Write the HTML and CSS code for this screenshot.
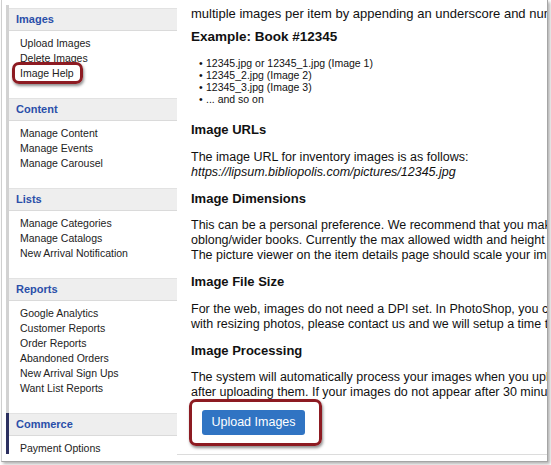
FILE: index.html
```html
<!DOCTYPE html>
<html lang="en">
<head>
  <meta charset="UTF-8">
  <title>Image Help</title>
  <link rel="stylesheet" href="styles.css">
</head>
<body>

<div class="window">
  <div class="layout">

    <!-- Admin side menu -->
    <aside class="sidebar">
      <section class="nav-group">
        <h4 class="nav-title">Images</h4>
        <ul class="nav-links">
          <li>Upload Images</li>
          <li>Delete Images</li>
          <li class="marked">Image Help<span class="callout callout-help"></span></li>
        </ul>
      </section>

      <section class="nav-group">
        <h4 class="nav-title">Content</h4>
        <ul class="nav-links">
          <li>Manage Content</li>
          <li>Manage Events</li>
          <li>Manage Carousel</li>
        </ul>
      </section>

      <section class="nav-group">
        <h4 class="nav-title">Lists</h4>
        <ul class="nav-links">
          <li>Manage Categories</li>
          <li>Manage Catalogs</li>
          <li>New Arrival Notification</li>
        </ul>
      </section>

      <section class="nav-group">
        <h4 class="nav-title">Reports</h4>
        <ul class="nav-links">
          <li>Google Analytics</li>
          <li>Customer Reports</li>
          <li>Order Reports</li>
          <li>Abandoned Orders</li>
          <li>New Arrival Sign Ups</li>
          <li>Want List Reports</li>
        </ul>
      </section>

      <section class="nav-group active">
        <h4 class="nav-title">Commerce</h4>
        <ul class="nav-links">
          <li>Payment Options</li>
        </ul>
      </section>
    </aside>

    <!-- Help text -->
    <main class="content">
      <p class="lead">multiple images per item by appending an underscore and number to the file name.</p>

      <h3 class="first">Example: Book #12345</h3>
      <ul class="examples">
        <li>12345.jpg or 12345_1.jpg (Image 1)</li>
        <li>12345_2.jpg (Image 2)</li>
        <li>12345_3.jpg (Image 3)</li>
        <li>... and so on</li>
      </ul>

      <h3 class="after-list">Image URLs</h3>
      <p>The image URL for inventory images is as follows:<br>
        <em>https://lipsum.bibliopolis.com/pictures/12345.jpg</em></p>

      <h3>Image Dimensions</h3>
      <p>This can be a personal preference. We recommend that you make your images at least 600 pixels tall for<br>
        oblong/wider books. Currently the max allowed width and height is 2000 pixels.<br>
        The picture viewer on the item details page should scale your images to fit the screen.</p>

      <h3>Image File Size</h3>
      <p>For the web, images do not need a DPI set. In PhotoShop, you can use "Save for Web". If you need help<br>
        with resizing photos, please contact us and we will setup a time to go over it.</p>

      <h3>Image Processing</h3>
      <p>The system will automatically process your images when you upload them. Allow up to 30 minutes<br>
        after uploading them. If your images do not appear after 30 minutes, please contact us.</p>

      <div class="actions">
        <a class="btn">Upload Images<span class="callout callout-btn"></span></a>
      </div>
    </main>

  </div>
</div>

</body>
</html>
```

FILE: styles.css
```css
body {
  margin: 0;
  font-family: "Liberation Sans", Arial, Helvetica, sans-serif;
  background-color: white;
  width: 551px;
  height: 465px;
  overflow: hidden;
}

.window {
  box-sizing: border-box;
  width: 547px;
  height: 462px;
  margin-left: 1px;
  border-left: 1px solid #cfcfcf;
  border-right: 1px solid #a5a5a5;
  border-bottom: 1px solid #a5a5a5;
  box-shadow: 2px 2px 3px rgba(0, 0, 0, 0.3);
  overflow: hidden;
}

.layout {
  display: flex;
  height: 455px;
  padding-left: 4px;
}

/* sidebar */

.sidebar {
  flex: none;
  width: 171px;
  height: 449px;
  margin-top: 5px;
  overflow: hidden;
}

.nav-group {
  border-left: 3px solid #d2d2d2;
  padding-bottom: 17px;
}

.nav-group:first-child {
  padding-top: 3px;
}

.nav-group.active {
  border-left-color: #2c3060;
}

.nav-title {
  margin: 0;
  height: 21px;
  line-height: 21px;
  padding-left: 7px;
  background-color: #eeeeee;
  border-top: 1px solid #e2e2e2;
  border-bottom: 1px solid #dadada;
  font-size: 11px;
  font-weight: bold;
  color: #2a4fa9;
}

.nav-links {
  list-style: none;
  margin: 0;
  padding: 5px 0 0 11px;
  font-size: 10.5px;
  line-height: 15px;
  color: #222;
}

.marked {
  position: relative;
}

/* red annotation frames */

.callout {
  position: absolute;
  box-sizing: border-box;
  border: 3px solid #8d1b22;
  border-radius: 7px;
  box-shadow: 1px 2px 3px rgba(0, 0, 0, 0.45);
  pointer-events: none;
}

.callout-help {
  left: -8px;
  top: -4px;
  width: 71px;
  height: 22px;
}

.callout-btn {
  left: -13px;
  top: -11px;
  width: 133px;
  height: 47px;
}

/* main help text */

.content {
  flex: 1;
  min-width: 0;
  padding: 6px 0 0 14px;
  white-space: nowrap;
  overflow: hidden;
  border-bottom: 1px solid #dcdcdc;
  color: #111;
  font-size: 12.5px;
  line-height: 15px;
}

.content p {
  margin: 11.5px 0 0;
}

.content p.lead {
  margin: 0;
  font-size: 13px;
}

.content h3 {
  margin: 11px 0 0;
  font-size: 13px;
  line-height: 16px;
  font-weight: bold;
}

.content h3.first {
  margin-top: 8px;
  font-size: 13.5px;
}

.content h3.after-list {
  margin-top: 17px;
}

.examples {
  list-style: none;
  margin: 12px 0 0;
  padding: 0 0 0 8px;
  font-size: 10.5px;
  line-height: 12px;
}

.examples li::before {
  content: "\2022";
  display: inline-block;
  width: 7px;
}

.actions {
  margin-top: 10px;
  padding-left: 11px;
}

.btn {
  position: relative;
  display: inline-block;
  width: 103px;
  height: 25px;
  line-height: 25px;
  text-align: center;
  background-color: #3074c3;
  border-radius: 3px;
  color: white;
  font-size: 12.5px;
}
```
